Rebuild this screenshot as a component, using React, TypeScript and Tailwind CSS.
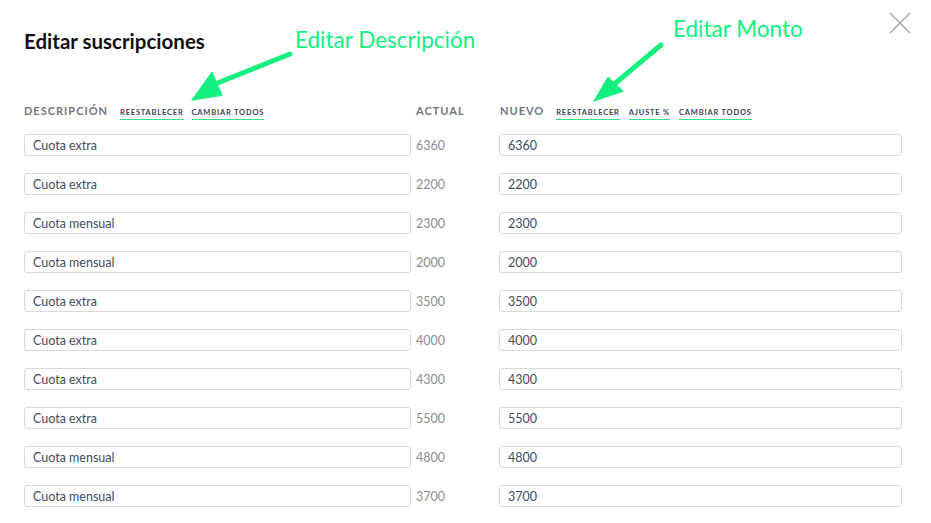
const rows = [
  { desc: "Cuota extra", actual: "6360" },
  { desc: "Cuota extra", actual: "2200" },
  { desc: "Cuota mensual", actual: "2300" },
  { desc: "Cuota mensual", actual: "2000" },
  { desc: "Cuota extra", actual: "3500" },
  { desc: "Cuota extra", actual: "4000" },
  { desc: "Cuota extra", actual: "4300" },
  { desc: "Cuota extra", actual: "5500" },
  { desc: "Cuota mensual", actual: "4800" },
  { desc: "Cuota mensual", actual: "3700" },
];

function HeadLink({ children }: { children: React.ReactNode }) {
  return (
    <button
      type="button"
      className="border-b border-[#3ddc84] pb-[2px] text-[7.5px] font-bold uppercase leading-none tracking-[0.8px] text-[#3b4250]"
    >
      {children}
    </button>
  );
}

function ColLabel({ children }: { children: React.ReactNode }) {
  return (
    <span className="text-[11px] font-bold uppercase leading-none tracking-[1px] text-[#737680]">
      {children}
    </span>
  );
}

function Arrows() {
  return (
    <svg
      className="pointer-events-none absolute inset-0"
      width="931"
      height="523"
      viewBox="0 0 931 523"
    >
      <g fill="#13f07f" stroke="#13f07f" strokeLinecap="round" strokeLinejoin="round">
        <line x1="290" y1="54" x2="210" y2="86" strokeWidth="5" />
        <polygon points="192,100 212,72 222,95" strokeWidth="1" />
        <line x1="661" y1="45" x2="612" y2="86" strokeWidth="5" />
        <polygon points="594,101 608,77 623,91" strokeWidth="1" />
      </g>
    </svg>
  );
}

export default function App() {
  return (
    <div className="relative h-[523px] w-[931px] overflow-hidden bg-white font-['Lato',sans-serif]">
      <button
        type="button"
        aria-label="Cerrar"
        className="absolute left-[888px] top-[11px] h-6 w-6"
      >
        <svg width="24" height="24" viewBox="0 0 24 24">
          <path d="M2 2 L22 22 M22 2 L2 22" stroke="#a8a8a8" strokeWidth="1.6" />
        </svg>
      </button>

      <span className="absolute left-[295px] top-[29px] text-[22.5px] leading-none text-[#13f07f]">
        Editar Descripción
      </span>
      <span className="absolute left-[673px] top-[18px] text-[22.5px] leading-none text-[#13f07f]">
        Editar Monto
      </span>
      <Arrows />

      <div className="pl-6 pt-[29px]">
        <h2 className="text-[20.5px] font-bold leading-6 text-[#111]">Editar suscripciones</h2>

        <div className="mt-[44px] grid grid-cols-[387px_88px_403px] items-baseline">
          <div className="flex items-baseline gap-3">
            <ColLabel>Descripción</ColLabel>
            <div className="flex items-baseline gap-2">
              <HeadLink>Reestablecer</HeadLink>
              <HeadLink>Cambiar todos</HeadLink>
            </div>
          </div>
          <div className="pl-[5px]">
            <ColLabel>Actual</ColLabel>
          </div>
          <div className="flex items-baseline gap-3 pl-px">
            <ColLabel>Nuevo</ColLabel>
            <div className="flex items-baseline gap-[9px]">
              <HeadLink>Reestablecer</HeadLink>
              <HeadLink>Ajuste %</HeadLink>
              <HeadLink>Cambiar todos</HeadLink>
            </div>
          </div>
        </div>

        <div className="mt-[13px] grid grid-cols-[387px_88px_403px] items-center gap-y-[17px]">
          {rows.map((r, i) => (
            <div key={i} className="contents">
              <input
                defaultValue={r.desc}
                className="h-[22px] rounded-[3px] border border-[#d9d9d9] px-2 text-[12.5px] text-[#414d5e] outline-none"
              />
              <span className="pl-[5px] pt-[2px] text-[12.5px] text-[#8c8c8c]">{r.actual}</span>
              <input
                defaultValue={r.actual}
                className="h-[22px] rounded-[3px] border border-[#d9d9d9] px-2 text-[12.5px] text-[#414d5e] outline-none"
              />
            </div>
          ))}
        </div>
      </div>
    </div>
  );
}
